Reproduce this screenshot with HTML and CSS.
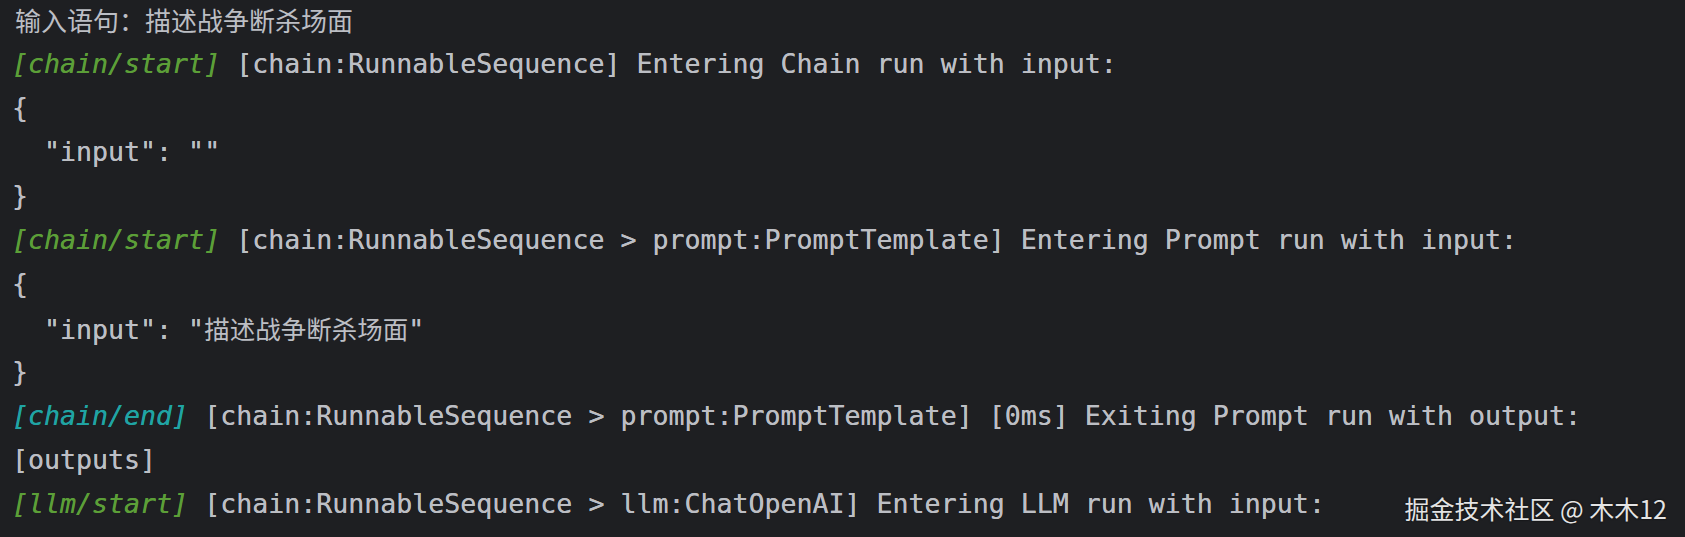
FILE: index.html
```html
<!DOCTYPE html>
<html lang="zh-CN">
<head>
<meta charset="utf-8">
<link rel="stylesheet" href="styles.css">
</head>
<body>
<div class="console">
  <div class="line cjk">输入语句：描述战争断杀场面</div>
  <div class="line"><span class="tag start">[chain/start]</span> [chain:RunnableSequence] Entering Chain run with input:</div>
  <div class="line">{</div>
  <div class="line">  "input": ""</div>
  <div class="line">}</div>
  <div class="line"><span class="tag start">[chain/start]</span> [chain:RunnableSequence &gt; prompt:PromptTemplate] Entering Prompt run with input:</div>
  <div class="line">{</div>
  <div class="line">  "input": "<span class="zh">描述战争断杀场面</span>"</div>
  <div class="line">}</div>
  <div class="line"><span class="tag end">[chain/end]</span> [chain:RunnableSequence &gt; prompt:PromptTemplate] [0ms] Exiting Prompt run with output:</div>
  <div class="line">[outputs]</div>
  <div class="line"><span class="tag start">[llm/start]</span> [chain:RunnableSequence &gt; llm:ChatOpenAI] Entering LLM run with input:</div>
  <div class="line">{</div>
</div>
<div class="watermark">掘金技术社区 @ 木木12</div>
</body>
</html>
```
FILE: styles.css
```css
html, body {
  margin: 0;
  padding: 0;
  background: #1e1f22;
  overflow: hidden;
}
body {
  width: 1685px;
  height: 537px;
  position: relative;
}
.console {
  margin-top: -2px;
  padding-left: 12px;
  font-family: "DejaVu Sans Mono", "Noto Sans CJK SC", monospace;
  font-size: 26.6px;
  line-height: 44px;
  color: #bcbec4;
  text-shadow: 0 0 0.4px #bcbec4;
}
.line {
  white-space: pre;
  height: 44px;
}
.cjk {
  font-family: "Noto Sans CJK SC", sans-serif;
  font-size: 26px;
  padding-left: 3px;
  text-shadow: none;
}
.zh {
  font-family: "Noto Sans CJK SC", sans-serif;
  font-size: 25.5px;
  text-shadow: none;
}
.tag {
  font-style: italic;
}
.start {
  color: #5c9f38;
  text-shadow: 0 0 0.5px #5c9f38;
}
.end {
  color: #20a4a4;
  text-shadow: 0 0 0.5px #20a4a4;
}
.watermark {
  position: absolute;
  right: 18px;
  bottom: 14px;
  font-family: "Noto Sans CJK SC", sans-serif;
  font-size: 25px;
  line-height: 30px;
  color: #e4e4e4;
  text-shadow: 0 0 2px rgba(0,0,0,0.8);
}
```
